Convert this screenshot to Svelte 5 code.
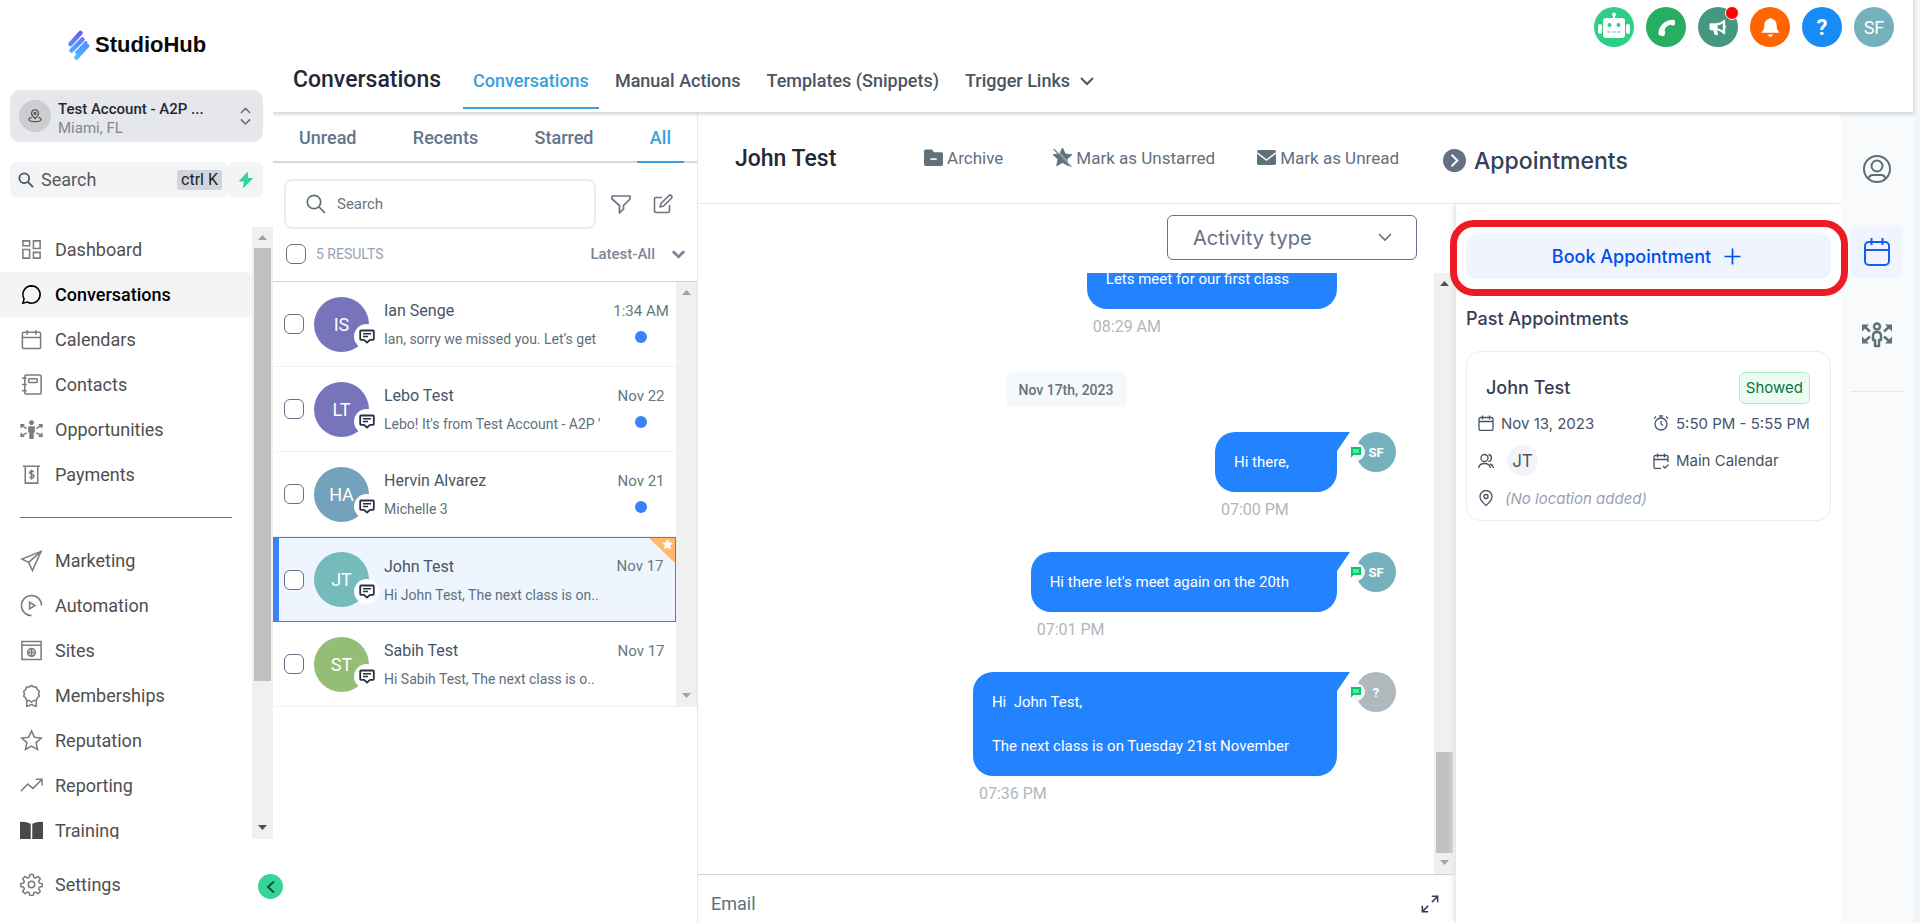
<script>
  const icons = {
    dashboard: '<path d="M3 3h7v5H3zM14 3h7v8h-7zM3 12h7v9H3zM14 15h7v6h-7z"/>',
    chat: '<path d="M12 3a9 9 0 1 1-4.500 16.800L3 21l1.300-4.400A9 9 0 0 1 12 3z"/>',
    calendar: '<rect x="2.500" y="4.500" width="19" height="17" rx="1.500"/><path d="M2.500 10h19M7.500 2v5M16.500 2v5"/>',
    contacts: '<rect x="5" y="2" width="17" height="20" rx="1.500"/><rect x="9" y="6" width="9" height="4" rx="1"/><path d="M2 5.500h5M2 12h5M2 18.500h5"/>',
    opportunities: '<circle cx="12" cy="5" r="2.600" fill="currentColor" stroke="none"/><path d="M8.500 20V9.500q0-1 1-1h5q1 0 1 1V15h-1.200v7H9.700v-7H8.500z" fill="currentColor" stroke="none"/><path d="M7 11 1.500 7.500M4.500 7H1l.5 3.500M17 11l5.500-3.500M19.500 7H23l-.5 3.500M7 15.500l-5.500 3M1.500 15.500 1 19h3.500M17 15.500l5.500 3M22.500 15.500 23 19h-3.500" stroke-width="1.500"/>',
    payments: '<path d="M3 3.500h18M5.500 3.500V21h13V3.500"/><path d="M14.500 9.200q-2.500-1.600-4 0c-1 1.600.5 2.200 1.500 2.600 1.500.5 3.300 1.200 2.200 2.900q-1.500 1.500-4.500 0M12 7v10.500"/>',
    marketing: '<path d="M22 2.500 2 10.500l7 3.500 4 8.500zM22 2.500 9 14"/>',
    automation: '<path d="M12 22.500A10.500 10.500 0 1 1 22.500 12M10 8.500v7l5.500-3.500z"/>',
    sites: '<path d="M2 2.500h20v19H2zM2 6.500h20"/><circle cx="12" cy="14" r="4"/><path d="M8 14h8M12 10v8M12 10q-4 4 0 8M12 10q4 4 0 8" stroke-width="1"/>',
    memberships: '<path d="m12 1.500 2.300 1.600 2.800.1.900 2.600 2.200 1.700-.8 2.700.8 2.600-2.200 1.700-.9 2.600-2.800.1-2.300 1.600-2.300-1.600-2.800-.1-.9-2.600-2.200-1.700.8-2.600-.8-2.700L6 5.800l.9-2.600 2.800-.1zM7 17v6.500l5-2 5 2V17"/>',
    reputation: '<path d="m12 2 3 6.600 7.200.8-5.400 4.800 1.500 7.200L12 17.800l-6.300 3.600 1.500-7.200L1.800 9.400 9 8.600z"/>',
    reporting: '<path d="m1 18 7-7.500 5.500 4.500L22.500 6M16.500 5.500H23V12"/>',
    training: '<path d="M0 3q6-.5 11.200 2v18Q6 20.500 0 21zM24 3q-6-.5-11.200 2v18Q18 20.500 24 21z" fill="#4a4a4a" stroke="none"/>',
    settings: '<circle cx="12" cy="12" r="3.300"/><path d="M10.300 1.500h3.400l.7 3.100 1.700.7 2.700-1.700 2.400 2.400-1.700 2.700.7 1.700 3 .7v2.900l-3 .8-.7 1.700 1.700 2.700-2.400 2.400-2.700-1.700-1.700.7-.7 3h-3.400l-.7-3-1.700-.7-2.700 1.700-2.400-2.400 1.700-2.700-.7-1.700-3-.8v-2.900l3-.7.700-1.700L2.800 6l2.400-2.400 2.700 1.700 1.700-.7z" stroke-linejoin="round"/>'
  };

  const navMain = [
    ['Dashboard', 'dashboard'], ['Conversations', 'chat'], ['Calendars', 'calendar'],
    ['Contacts', 'contacts'], ['Opportunities', 'opportunities'], ['Payments', 'payments']
  ];
  const navMore = [
    ['Marketing', 'marketing'], ['Automation', 'automation'], ['Sites', 'sites'],
    ['Memberships', 'memberships'], ['Reputation', 'reputation'], ['Reporting', 'reporting'],
    ['Training', 'training']
  ];
  const filters = ['Unread', 'Recents', 'Starred', 'All'];
  const people = [
    { name: 'Ian Senge', initials: 'IS', tone: 'purple', text: 'Ian, sorry we missed you. Let’s get', time: '1:34 AM', unread: true },
    { name: 'Lebo Test', initials: 'LT', tone: 'purple', text: "Lebo! It's from Test Account - A2P '", time: 'Nov 22', unread: true },
    { name: 'Hervin Alvarez', initials: 'HA', tone: 'blue', text: 'Michelle 3', time: 'Nov 21', unread: true },
    { name: 'John Test', initials: 'JT', tone: 'teal', text: 'Hi John Test, The next class is on..', time: 'Nov 17', selected: true },
    { name: 'Sabih Test', initials: 'ST', tone: 'green', text: 'Hi Sabih Test, The next class is o..', time: 'Nov 17' }
  ];
  const messages = [
    { text: 'Hi there,', time: '07:00 PM', by: 'SF' },
    { text: "Hi there let's meet again on the 20th", time: '07:01 PM', by: 'SF' },
    { text: 'Hi  John Test,\n\nThe next class is on Tuesday 21st November', time: '07:36 PM', by: '?' }
  ];
</script>

{#snippet icon(name)}
  <svg class="nav-icon" viewBox="0 0 24 24" fill="none" stroke="currentColor" stroke-width="1.6" aria-hidden="true">{@html icons[name]}</svg>
{/snippet}

{#snippet navLink(label, name)}
  <a href="#{name}" class="nav-link" class:active={name === 'chat'}>{@render icon(name)}{label}</a>
{/snippet}

{#snippet chevron(cls)}
  <svg class="chev {cls}" viewBox="0 0 16 16" fill="none" stroke="currentColor" stroke-width="2" aria-hidden="true"><path d="m2 5 6 6 6-6" /></svg>
{/snippet}

{#snippet scrollbar(kind)}
  <div class="scrollbar {kind}" aria-hidden="true">
    <svg viewBox="0 0 21 21"><path d="M6 13h9l-4.500-5z" fill="currentColor" /></svg>
    <div class="track"><div class="thumb"></div></div>
    <svg class="down" viewBox="0 0 21 21"><path d="M6 7h9l-4.500 5z" fill="currentColor" /></svg>
  </div>
{/snippet}

{#snippet bubble(m)}
  <div class="message">
    <div class="message-main">
      <div class="bubble" class:tailed={m.by}>{m.text}</div>
      <time>{m.time}</time>
    </div>
    {#if m.by}
      <div class="sender" class:unknown={m.by === '?'}>
        {m.by}
        <span class="sms"><svg viewBox="0 0 12 12" aria-hidden="true"><path d="M1 1h10v8H3.500L1 11.500z" fill="#0c6" /><path d="M3 4h6M3 6h6" stroke="#fff" stroke-width=".8" /></svg></span>
      </div>
    {/if}
  </div>
{/snippet}

<div class="app">
  <aside class="sidebar">
    <a class="logo" href="#home">
      <svg viewBox="0 0 22 32" aria-hidden="true">
        <defs><linearGradient id="brand" gradientUnits="userSpaceOnUse" x1="0" y1="0" x2="0" y2="32"><stop offset="0" stop-color="#6b4cf0" /><stop offset=".45" stop-color="#5b8cff" /><stop offset="1" stop-color="#45c6ff" /></linearGradient></defs>
        <g stroke="url(#brand)" stroke-width="4.500" stroke-linecap="round"><path d="M3 15 13 4" /><path d="M4 21.500 15 10.500" /><path d="M9 28.500 19.500 17" /><path d="M9 23.500 18.500 13.500" stroke-width="3" /></g>
      </svg>
      StudioHub
    </a>

    <button class="account" type="button">
      <span class="account-pin"><svg viewBox="0 0 18 18" fill="none" stroke="#484848" stroke-width="1.300"><path d="M9 12 6 8.500C4 5.500 5.500 2 9 2s5 3.500 3 6.500z" /><circle cx="9" cy="6" r="1.200" /><path d="M5 10.500c-5 1.500-3.500 5 4 5s9-3.500 4-5" /></svg></span>
      <span class="account-text"><b>Test Account - A2P ...</b><span>Miami, FL</span></span>
      <svg class="updown" viewBox="0 0 12 20" fill="none" stroke="#666b76" stroke-width="1.600"><path d="m1 6.500 5-5 5 5M1 13.500l5 5 5-5" /></svg>
    </button>

    <div class="quick">
      <button class="quick-search" type="button">
        <svg viewBox="0 0 18 18" fill="none" stroke="#465362" stroke-width="2"><circle cx="7" cy="7" r="5.500" /><path d="m11 11 6 6" /></svg>
        <span>Search</span><kbd>ctrl K</kbd>
      </button>
      <button class="bolt" type="button" aria-label="Quick actions"><svg viewBox="0 0 14 16"><path d="M8.500.5.500 9h5L4.500 15.500 13.500 6.500H8.300z" fill="#37d399" stroke="#37d399" stroke-linejoin="round" /></svg></button>
    </div>

    <div class="nav-wrap">
      <nav>
        {#each navMain as [label, name]}{@render navLink(label, name)}{/each}
        <hr />
        {#each navMore as [label, name]}{@render navLink(label, name)}{/each}
      </nav>
      {@render scrollbar('nav-scroll')}
    </div>
    <div class="nav-foot">{@render navLink('Settings', 'settings')}</div>
    <button class="collapse" type="button" aria-label="Collapse menu"><svg viewBox="0 0 12 14" fill="none" stroke="#08543b" stroke-width="2"><path d="M9 1.500 3 7l6 5.500" /></svg></button>
  </aside>

  <div class="main">
    <header class="topbar">
      <h1>Conversations</h1>
      <nav class="tabs">
        <a class="on" href="#conversations">Conversations</a>
        <a href="#manual">Manual Actions</a>
        <a href="#templates">Templates (Snippets)</a>
        <a href="#links">Trigger Links {@render chevron('links')}</a>
      </nav>
      <div class="actions">
        <button type="button" class="robot" aria-label="Assistant"><svg class="big" viewBox="0 0 32 32" fill="#fff"><rect x="5" y="7" width="22" height="20" rx="3" /><circle cx="16" cy="3.500" r="2" /><path d="M15 4h2v4h-2z" /><rect y="13" width="4" height="10" rx="2" /><rect x="28" y="13" width="4" height="10" rx="2" /><g fill="#2ece89"><circle cx="11.500" cy="14" r="2" /><circle cx="20.500" cy="14" r="2" /><path d="M9.500 20.500h3v1h-3zM14.500 20.500h3v1h-3zM19.500 20.500h3v1h-3z" /></g></svg></button>
        <button type="button" class="phone" aria-label="Call"><svg viewBox="0 0 20 20"><path d="M1.500 16.500C1.500 9 7.500 2 17 1.800q2 0 2 1.700l-.2 3.200q-.5 1.500-2 1.200l-3-.8q-1.200-.2-1.600 1-4 1.500-4.200 5.500 1.200.5.800 1.500l-.8 3q-.6 1.300-2 1.200L3 18.200q-1.500 0-1.500-1.700z" fill="#fff" /></svg></button>
        <button type="button" class="horn" aria-label="Announcements"><svg viewBox="0 0 20 20"><path d="M2 5.500h6q5-.5 7.500-3.500h1.500v5.500q2 1 0 3.500v6h-1.500q-3-3.500-7-4l1 5H6l-1.500-5H2q-1.500-.5-1.500-2V7q0-1.500 1.500-1.500zM9 7.700v3q3 .6 5.500 2.500V5.500Q12 7.300 9 7.700z" fill="#fff" fill-rule="evenodd" /></svg><i></i></button>
        <button type="button" class="bell" aria-label="Notifications"><svg viewBox="0 0 20 22"><path d="M9 2V1h2v1c4 .7 5.500 3.500 5.500 7 0 5 2.500 6.500 3 7.500H.5c.5-1 3-2.500 3-7.500 0-3.500 1.500-6.300 5.500-7zM7.500 18.500h5q-.5 2.500-2.500 2.500t-2.500-2.500z" fill="#fff" /></svg></button>
        <button type="button" class="help" aria-label="Help">?</button>
        <button type="button" class="me" aria-label="Profile">SF</button>
      </div>
    </header>

    <div class="workspace">
      <section class="list">
        <nav class="filters">
          {#each filters as f}<a href="#{f}" class:on={f === 'All'}>{f}</a>{/each}
        </nav>
        <div class="list-search">
          <label>
            <svg viewBox="0 0 20 20" fill="none" stroke="#5c6e77" stroke-width="1.700"><circle cx="8" cy="8" r="6.700" /><path d="m13 13 6 6" /></svg>
            <input type="text" placeholder="Search" aria-label="Search conversations" />
          </label>
          <button type="button" aria-label="Filter"><svg viewBox="0 0 20 20" fill="none" stroke="#6b7480" stroke-width="1.700" stroke-linejoin="round"><path d="M1 2h18v3l-6.500 6.500v3.500L8.500 19v-7.500L1 5z" /></svg></button>
          <button type="button" aria-label="Compose"><svg viewBox="0 0 20 20" fill="none" stroke="#6b7480" stroke-width="1.600" stroke-linejoin="round"><path d="M9 3.500H3q-1.500 0-1.500 1.500v12q0 1.500 1.500 1.500h12q1.500 0 1.500-1.500v-6M16 1.500q1.500-1 2.500.3t0 2.400L10.500 12 7 13l1-3.500z" /></svg></button>
        </div>
        <div class="list-meta">
          <label><input type="checkbox" />5 RESULTS</label>
          <button type="button">Latest-All {@render chevron('sort')}</button>
        </div>
        <div class="rows-wrap">
          <ul class="rows">
            {#each people as p}
              <li class:selected={p.selected}>
                <input type="checkbox" aria-label="Select {p.name}" />
                <div class="avatar {p.tone}">{p.initials}
                  <span class="note"><svg viewBox="0 0 16 15" fill="none" stroke="#283044" stroke-width="1.800" stroke-linejoin="round"><path d="M2 1.500h12q.8 0 .8.800V10q0 .8-.8.800h-3L8 13.500l-3-2.700H2q-.8 0-.8-.8V2.300q0-.8.800-.8z" /><path d="M4 4.700h8M4 7.500h5" stroke-width="1.400" /></svg></span>
                </div>
                <div class="who"><span class="name">{p.name}</span><span class="excerpt">{p.text}</span></div>
                <div class="when"><time>{p.time}</time>{#if p.unread}<i></i>{/if}</div>
                {#if p.selected}<svg class="flag" viewBox="0 0 26 25"><path d="M0 0h26v25z" fill="#ffb870" /><path d="m18.500 2 1.500 2.800 3 .5-2.200 2.200.5 3-2.800-1.300-2.800 1.300.5-3L14 5.300l3-.5z" fill="#fff" stroke="#fff" /></svg>{/if}
              </li>
            {/each}
          </ul>
          {@render scrollbar('empty')}
        </div>
      </section>

      <section class="detail">
        <div class="detail-head">
          <h2>John Test</h2>
          <div class="head-actions">
            <button type="button"><svg viewBox="0 0 18 18"><path d="M1.500 1.500h6l2 2.500h7q1.500 0 1.500 1.500v10q0 1.500-1.500 1.500h-15Q0 17 0 15.500V3q0-1.500 1.500-1.500z" fill="#5f717b" /><path d="M6 10.500h6" stroke="#fff" stroke-width="1.500" /></svg>Archive</button>
            <button type="button"><svg viewBox="0 0 20 20"><path d="m10 0 2.900 6.300 6.900.8-5.100 4.700 1.400 6.900-6.100-3.500-6.100 3.500 1.400-6.900L.2 7.100l6.900-.8z" fill="#5f717b" stroke="#5f717b" stroke-linejoin="round" /><path d="m2 0 18 19" stroke="#fff" stroke-width=".7" /><path d="m.7 1 18.500 19" stroke="#7b8a93" stroke-width="1.500" /></svg>Mark as Unstarred</button>
            <button type="button"><svg viewBox="0 0 18 18"><rect y="2" width="18" height="14" rx="1.500" fill="#5f717b" /><path d="m0 4.500 9 7 9-7" fill="none" stroke="#fff" stroke-width="1.400" /></svg>Mark as Unread</button>
          </div>
          <div class="panel-title">
            <button type="button" aria-label="Hide panel"><svg viewBox="0 0 24 24" fill="none"><circle cx="12" cy="12" r="12" fill="#667085" /><path d="m9 6 6 6-6 6" stroke="#fff" stroke-width="2" /></svg></button>
            <h2>Appointments</h2>
          </div>
        </div>

        <div class="detail-body">
          <div class="chat">
            <div class="activity">
              <select aria-label="Activity type"><option>Activity type</option></select>
              {@render chevron('type')}
            </div>
            <div class="thread-wrap">
              <div class="thread">
                {@render bubble({ text: 'Lets meet for our first class', time: '08:29 AM' })}
                <div class="day"><span>Nov 17th, 2023</span></div>
                {#each messages as m}{@render bubble(m)}{/each}
              </div>
              {@render scrollbar('chat-scroll')}
            </div>
            <div class="composer">
              <button type="button" class="channel">Email</button>
              <button type="button" aria-label="Expand"><svg viewBox="0 0 20 20" fill="none" stroke="#333e4d" stroke-width="1.700"><path d="M12 1.500h6.500V8M18.500 1.500 12 8M8 18.500H1.500V12M1.500 18.500 8 12" /></svg></button>
            </div>
          </div>

          <aside class="panel">
            <div class="book-wrap"><button class="book" type="button">Book Appointment <svg viewBox="0 0 18 18" stroke="currentColor" stroke-width="1.800"><path d="M9 .5v17M.5 9h17" /></svg></button></div>
            <h3>Past Appointments</h3>
            <article class="card">
              <div class="card-head"><h4>John Test</h4><span class="status">Showed</span></div>
              <div class="facts">
                <span><svg viewBox="0 0 16 16"><rect x="1" y="2.500" width="14" height="13" rx="1.500" /><path d="M1 6.500h14M4.500.5v4M11.500.5v4" /></svg>Nov 13, 2023</span>
                <span><svg viewBox="0 0 16 16"><circle cx="8" cy="9" r="6" /><path d="M8 6v3l2 1.500M6 .8h4M1 3.500l2-2M15 3.500l-2-2M8 1v2" /></svg>5:50 PM - 5:55 PM</span>
                <span class="tall"><svg viewBox="0 0 16 16"><circle cx="6.500" cy="5" r="3.500" /><path d="M.5 15q1-4.500 6-4.500t6 4.500M10.500 1.500q3 .5 3 3.500t-3 3.500M12 11q3 .7 3.500 4" /></svg><b>JT</b></span>
                <span class="tall"><svg viewBox="0 0 16 16"><path d="M15 9V4q0-1.500-1.500-1.500h-11Q1 2.500 1 4v10q0 1.500 1.500 1.500H8M1 6.500h14M4.500.5v4M11.500.5v4M10 13l2 2 3.500-3.500" /></svg>Main Calendar</span>
                <em><svg viewBox="0 0 16 16"><path d="M8 15.500q-6-5-6-9a6 6 0 0 1 12 0q0 4-6 9z" /><circle cx="8" cy="6.500" r="2" /></svg>(No location added)</em>
              </div>
            </article>
          </aside>
        </div>
      </section>

      <nav class="rail">
        <a href="#contact" aria-label="Contact"><svg viewBox="0 0 28 28" fill="none" stroke="#5c6f78" stroke-width="2"><circle cx="14" cy="14" r="13" /><circle cx="14" cy="11" r="5.500" /><path d="M5.500 23.500q1-3.500 4-3.500h9q3 0 4 3.500" /></svg></a>
        <a href="#appointments" class="on" aria-label="Appointments"><svg viewBox="0 0 28 28" fill="none" stroke="#155eef" stroke-width="2"><rect x="2" y="4" width="24" height="23" rx="4" /><path d="M2 12h24M8.500 0v7M19.500 0v7" /></svg></a>
        <a href="#opportunity" aria-label="Opportunities"><svg class="wide" viewBox="0 0 30 26" fill="none" stroke="#5f727c" stroke-width="2.500"><circle cx="15" cy="4.500" r="3" /><path d="M13 24v-6h-2v-4q0-4 4-4t4 4v4h-2v6z" stroke-linejoin="round" /><path d="M2 4 8 9.500M28 4l-6 5.500M2 20l6-5.500M28 20l-6-5.500" /><path d="M0 2.500h7l-7 7zM30 2.500h-7l7 7zM0 21.500h7l-7-7zM30 21.500h-7l7-7z" fill="#5f727c" stroke="none" /></svg></a>
        <hr />
      </nav>
    </div>
  </div>
</div>

<style>
  :global(body) { font-family: Roboto, sans-serif; background: #f2f6f9; }
  * { box-sizing: border-box; }
  button { font: inherit; color: inherit; background: none; border: 0; padding: 0; cursor: pointer; }
  a { color: inherit; text-decoration: none; }
  h1, h2, h3, h4, ul { margin: 0; padding: 0; }
  h1, h2, h3, h4 { font-weight: 500; }
  svg { display: block; flex: none; }
  .app { display: flex; height: 100vh; overflow: hidden; padding-right: 7px; }

  .sidebar { position: relative; z-index: 3; flex: none; width: 273px; display: flex; flex-direction: column; background: #fff; }
  .logo { display: flex; align-items: center; gap: 5px; height: 34px; margin: 28px 0 28px 67px; font: 700 22px "Liberation Sans", sans-serif; color: #0a0a0a; }
  .logo svg { width: 23px; height: 32px; }
  .account { display: flex; align-items: center; gap: 7px; height: 52px; margin: 0 10px 20px; padding: 0 12px 0 9px; border-radius: 10px; background: #e5e7eb; text-align: left; }
  .account-pin { display: grid; place-items: center; width: 32px; height: 32px; border-radius: 50%; background: #cdcdd0; }
  .account-pin svg { width: 16px; }
  .account-text { flex: 1; display: flex; flex-direction: column; padding-top: 5px; font-size: 15px; line-height: 19px; color: #808690; }
  .account-text b { font-weight: 500; color: #1f2937; }
  .updown { width: 11px; }
  .quick { display: flex; height: 35px; margin: 0 10px 30px; }
  .quick-search { flex: 1; display: flex; align-items: center; gap: 7px; padding: 0 6px 0 8px; border-radius: 6px; background: #f3f4f6; font-size: 18px; color: #56585c; }
  .quick-search svg { width: 16px; }
  .quick-search span { flex: 1; text-align: left; }
  kbd { font: 16px/20px Roboto, sans-serif; color: #222; background: #d1d5db; border-radius: 2px; padding: 0 4px; }
  .bolt { display: grid; place-items: center; width: 35px; border-radius: 6px; background: #f3f4f6; }
  .bolt svg { width: 14px; }

  .nav-wrap { flex: 1; min-height: 0; display: flex; }
  .nav-wrap nav { flex: 1; overflow: hidden; }
  .nav-link { display: flex; align-items: center; gap: 12px; height: 45px; padding-left: 20px; font-size: 18px; color: #4f4f4f; border-radius: 0 6px 6px 0; }
  .nav-link.active { background: #f3f4f6; color: #000; font-weight: 500; }
  .nav-icon { width: 23px; height: 23px; color: #7c7c7c; }
  .active .nav-icon { color: #000; }
  .nav-wrap hr { height: 1px; margin: 20px; border: 0; background: #64717c; }
  .nav-foot { height: 84px; padding-top: 23px; }
  .collapse { position: absolute; right: -10px; bottom: 24px; display: grid; place-items: center; width: 25px; height: 25px; border-radius: 50%; background: #37d399; }
  .collapse svg { width: 12px; }

  .scrollbar { flex: none; width: 21px; display: flex; flex-direction: column; background: #f0f0f0; color: #a3a3a3; }
  .track { flex: 1; display: flex; flex-direction: column; padding: 0 2px; }
  .thumb { background: #c1c1c1; }
  .nav-scroll .thumb { height: 76%; }
  .nav-scroll .down, .chat-scroll svg:first-child { color: #505050; }
  .chat-scroll .track { justify-content: flex-end; }
  .chat-scroll .thumb { height: 18%; }
  .empty .thumb { display: none; }

  .main { flex: 1; min-width: 0; display: flex; flex-direction: column; }
  .topbar { position: relative; z-index: 2; flex: none; height: 112px; display: flex; background: #fff; padding: 0 19px 0 20px; box-shadow: 0 1px 4px 1px #c8d0d4; }
  h1 { font-size: 23px; line-height: 32px; color: #1f2937; margin: 64px 22px 0 0; }
  .tabs { display: flex; gap: 6px; height: 109px; align-items: stretch; }
  .tabs a { display: flex; align-items: center; padding: 54px 10px 0; font-size: 18px; font-weight: 500; color: #4b5563; border-bottom: 2px solid transparent; white-space: nowrap; }
  .tabs a.on { color: #37a0dc; border-color: #37a0dc; }
  .chev { width: 16px; height: 16px; }
  .chev.links { margin-left: 9px; }
  .actions { display: flex; gap: 12px; margin: 7px 0 0 auto; }
  .actions button { position: relative; display: grid; place-items: center; width: 40px; height: 40px; border-radius: 50%; color: #fff; font-size: 18px; }
  .actions svg { width: 19px; }
  .actions .big { width: 32px; }
  .robot { background: #2ece89; } .phone { background: #27ae60; } .horn { background: #459780; }
  .bell { background: #ff6600; } .help { background: #188bf6; } .me { background: #75b0bd; }
  .actions .help { font-size: 22px; font-weight: 700; }
  .horn i { position: absolute; right: -1px; top: -1px; width: 14px; height: 14px; border-radius: 50%; background: #f00; border: 1px solid #fff; }

  .workspace { flex: 1; min-height: 0; display: flex; }
  .list { flex: none; width: 425px; background: #fff; border-right: 1px solid #e4e7ec; }
  .filters { display: flex; justify-content: space-between; height: 51px; padding: 0 13px; border-bottom: 2px solid #d5d7df; }
  .filters a { display: flex; align-items: center; height: 51px; padding: 2px 13px 0; font-size: 18px; font-weight: 500; color: #64748b; border-bottom: 2px solid transparent; }
  .filters a.on { color: #37a0dc; border-color: #37a0dc; }
  .list-search { display: flex; align-items: center; gap: 22px; padding: 16px 24px 0 11px; }
  .list-search label { flex: 1; display: flex; align-items: center; gap: 9px; height: 50px; padding-left: 20px; border: 2px solid #ebecf1; border-radius: 8px; margin-right: -7px; }
  .list-search label svg { width: 20px; }
  .list-search input { flex: 1; min-width: 0; border: 0; outline: 0; font: 15px Roboto, sans-serif; background: none; }
  .list-search input::placeholder { color: #6b7280; }
  .list-search button svg { width: 20px; }
  .list-meta { display: flex; justify-content: space-between; align-items: center; height: 53px; padding: 0 11px 3px 13px; border-bottom: 1px solid #cfd4dc; color: #7c8796; }
  .list-meta label { display: flex; align-items: center; gap: 10px; font-size: 14px; color: #98a2b3; }
  .list-meta button { display: flex; align-items: center; gap: 16px; font-size: 15px; font-weight: 500; }
  .chev.sort { width: 15px; stroke-width: 3; }
  input[type="checkbox"] { appearance: none; flex: none; width: 20px; height: 20px; margin: 0; border: 1px solid #667085; border-radius: 6px; background: #fff; }
  .rows-wrap { display: flex; }
  .rows { flex: 1; min-width: 0; list-style: none; }
  li { position: relative; display: flex; align-items: center; height: 85px; padding: 0 0 0 11px; border-bottom: 1px solid #f1f2f4; }
  li.selected { background: #eff5fe; border: 1px solid #3b82f6; border-left-width: 6px; padding-left: 5px; }
  .avatar { position: relative; flex: none; display: grid; place-items: center; width: 55px; height: 55px; margin: 0 15px 0 10px; border-radius: 50%; color: #fff; font-size: 18px; }
  .purple { background: #7774bc; } .blue { background: #74a2bc; } .teal { background: #75bbbb; } .green { background: #94be76; }
  .note { position: absolute; right: -10px; bottom: 3px; display: grid; place-items: center; width: 25px; height: 25px; border-radius: 50%; background: #fff; }
  .note svg { width: 16px; }
  .who { flex: 1; min-width: 0; display: flex; flex-direction: column; gap: 6px; padding-top: 2px; overflow: hidden; white-space: nowrap; }
  .name { font-size: 16px; line-height: 22px; color: #475467; }
  .excerpt { font-size: 14px; line-height: 22px; color: #5f6f7c; overflow: hidden; }
  .when { flex: none; display: flex; flex-direction: column; align-items: center; width: 70px; height: 55px; padding-top: 3px; font-size: 15px; line-height: 22px; color: #667780; white-space: nowrap; }
  .when i { width: 12px; height: 12px; margin-top: 9px; border-radius: 50%; background: #3b82f6; }
  .flag { position: absolute; top: 0; right: 0; width: 26px; height: 25px; }

  .detail { flex: 1; min-width: 0; display: flex; flex-direction: column; background: #fff; }
  .detail-head { display: flex; align-items: center; height: 92px; border-bottom: 1px solid #e7e9ed; }
  h2 { font-size: 23px; line-height: 30px; color: #1f2937; }
  .detail-head > h2 { padding: 2px 0 0 37px; }
  .head-actions { display: flex; gap: 42px; margin-left: auto; padding-right: 44px; font-size: 17px; color: #607080; }
  .head-actions button { display: flex; align-items: center; gap: 4px; white-space: nowrap; }
  .head-actions button:first-child { margin-right: 8px; }
  .head-actions svg { width: 19px; }
  .panel-title { flex: none; width: 398px; display: flex; align-items: center; gap: 8px; padding-top: 6px; }
  .panel-title h2 { font-family: Inter, sans-serif; color: #344054; }
  .panel-title svg { width: 23px; }
  .detail-body { flex: 1; min-height: 0; display: flex; }
  .chat { flex: 1; min-width: 0; display: flex; flex-direction: column; }
  .activity { position: relative; flex: none; align-self: flex-end; width: 250px; height: 45px; margin: 11px 38px 13px 0; }
  select { appearance: none; width: 100%; height: 100%; padding: 0 25px; border: 1px solid #667085; border-radius: 6px; background: #fff; font: 20px Inter, sans-serif; color: #667085; }
  .chev.type { position: absolute; right: 24px; top: 14px; stroke-width: 1.6; color: #667085; }
  .thread-wrap { flex: 1; min-height: 0; display: flex; }
  .thread { flex: 1; min-width: 0; display: flex; flex-direction: column; justify-content: flex-end; overflow: hidden; padding: 0 38px 38px 0; }
  .message { flex: none; display: flex; justify-content: flex-end; gap: 19px; padding-bottom: 32px; }
  .message:first-child { padding-right: 59px; }
  .message-main { display: flex; flex-direction: column; }
  .bubble { position: relative; padding: 19px 48px 19px 19px; border-radius: 20px; background: #2383ff; color: #fff; font-size: 15px; line-height: 22px; white-space: pre-wrap; }
  .bubble.tailed { border-top-right-radius: 0; }
  .bubble.tailed::after { content: ""; position: absolute; left: 100%; top: 0; width: 13px; height: 19px; background: inherit; clip-path: polygon(0 0, 100% 0, 0 100%); }
  .message time { padding: 8px 0 0 6px; font-size: 16px; line-height: 20px; color: #b0b7bc; }
  .sender { position: relative; display: grid; place-items: center; width: 40px; height: 40px; border-radius: 50%; background: #75b0bd; color: #fff; font-size: 13px; font-weight: 700; }
  .sender.unknown { background: #afb8bc; }
  .sms { position: absolute; left: -9px; top: 11px; display: grid; place-items: center; width: 18px; height: 18px; border-radius: 50%; background: #f7f8fc; }
  .sms svg { width: 12px; }
  .day { flex: none; display: flex; justify-content: center; height: 63px; margin-right: -38px; padding: 3px 0 25px; }
  .day span { padding: 0 13px; border-radius: 6px; background: #f6f9fc; font-size: 14px; font-weight: 500; line-height: 37px; color: #66727a; }
  .composer { flex: none; display: flex; align-items: center; justify-content: space-between; height: 49px; padding: 9px 16px 0 13px; border-top: 1px solid #cfd2da; font-size: 18px; color: #607080; }
  .composer svg { width: 18px; }

  .panel { flex: none; width: 386px; padding: 30px 10px 0; border-left: 1px solid #e4e7ec; box-shadow: -4px 0 6px -2px #e4e6e9; font-family: Inter, sans-serif; color: #344054; }
  .book-wrap { position: relative; }
  .book-wrap::after { content: ""; position: absolute; z-index: 4; inset: -14px -17px -17px -16px; border: 7px solid #ed1c24; border-radius: 24px; pointer-events: none; }
  .book { display: flex; align-items: center; justify-content: center; gap: 13px; width: 100%; height: 45px; padding-right: 4px; border-radius: 10px; background: #eff4ff; color: #004eeb; font-size: 18px; font-weight: 500; }
  .book svg { width: 17px; }
  h3 { margin: 29px 0 21px; font-size: 18px; line-height: 22px; }
  .card { padding: 20px 20px 8px 11px; border: 1px solid #eaecf0; border-radius: 14px; }
  .card-head { display: flex; justify-content: space-between; align-items: center; padding-left: 8px; }
  h4 { font-size: 18px; line-height: 22px; }
  .status { padding: 0 6px; border: 1px solid #aaf0c4; border-radius: 6px; background: #edfcf2; color: #087443; font-size: 15px; line-height: 30px; }
  .facts { display: grid; grid-template-columns: 175px 1fr; margin-top: 5px; font-size: 15px; color: #475467; }
  .facts > * { display: flex; align-items: center; gap: 7px; height: 28px; white-space: nowrap; }
  .facts svg { width: 16px; height: 16px; fill: none; stroke: #475467; stroke-width: 1.3; }
  .facts .tall { height: 47px; }
  .facts b { display: grid; place-items: center; width: 31px; height: 31px; margin-left: 6px; border-radius: 50%; background: #f2f4f7; font-size: 17px; font-weight: 400; }
  .facts em { grid-column: 1 / 3; gap: 11px; color: #98a2b3; }

  .rail { flex: none; width: 72px; display: flex; flex-direction: column; align-items: center; gap: 30px; padding-top: 30px; background: #f9fafb; }
  .rail a { display: grid; place-items: center; width: 52px; height: 53px; border-radius: 6px; }
  .rail a.on { background: #eff4ff; }
  .rail svg { width: 28px; }
  .rail .wide { width: 30px; }
  .rail hr { width: 52px; height: 1px; margin: 0; border: 0; background: #e4e7ec; }
</style>
